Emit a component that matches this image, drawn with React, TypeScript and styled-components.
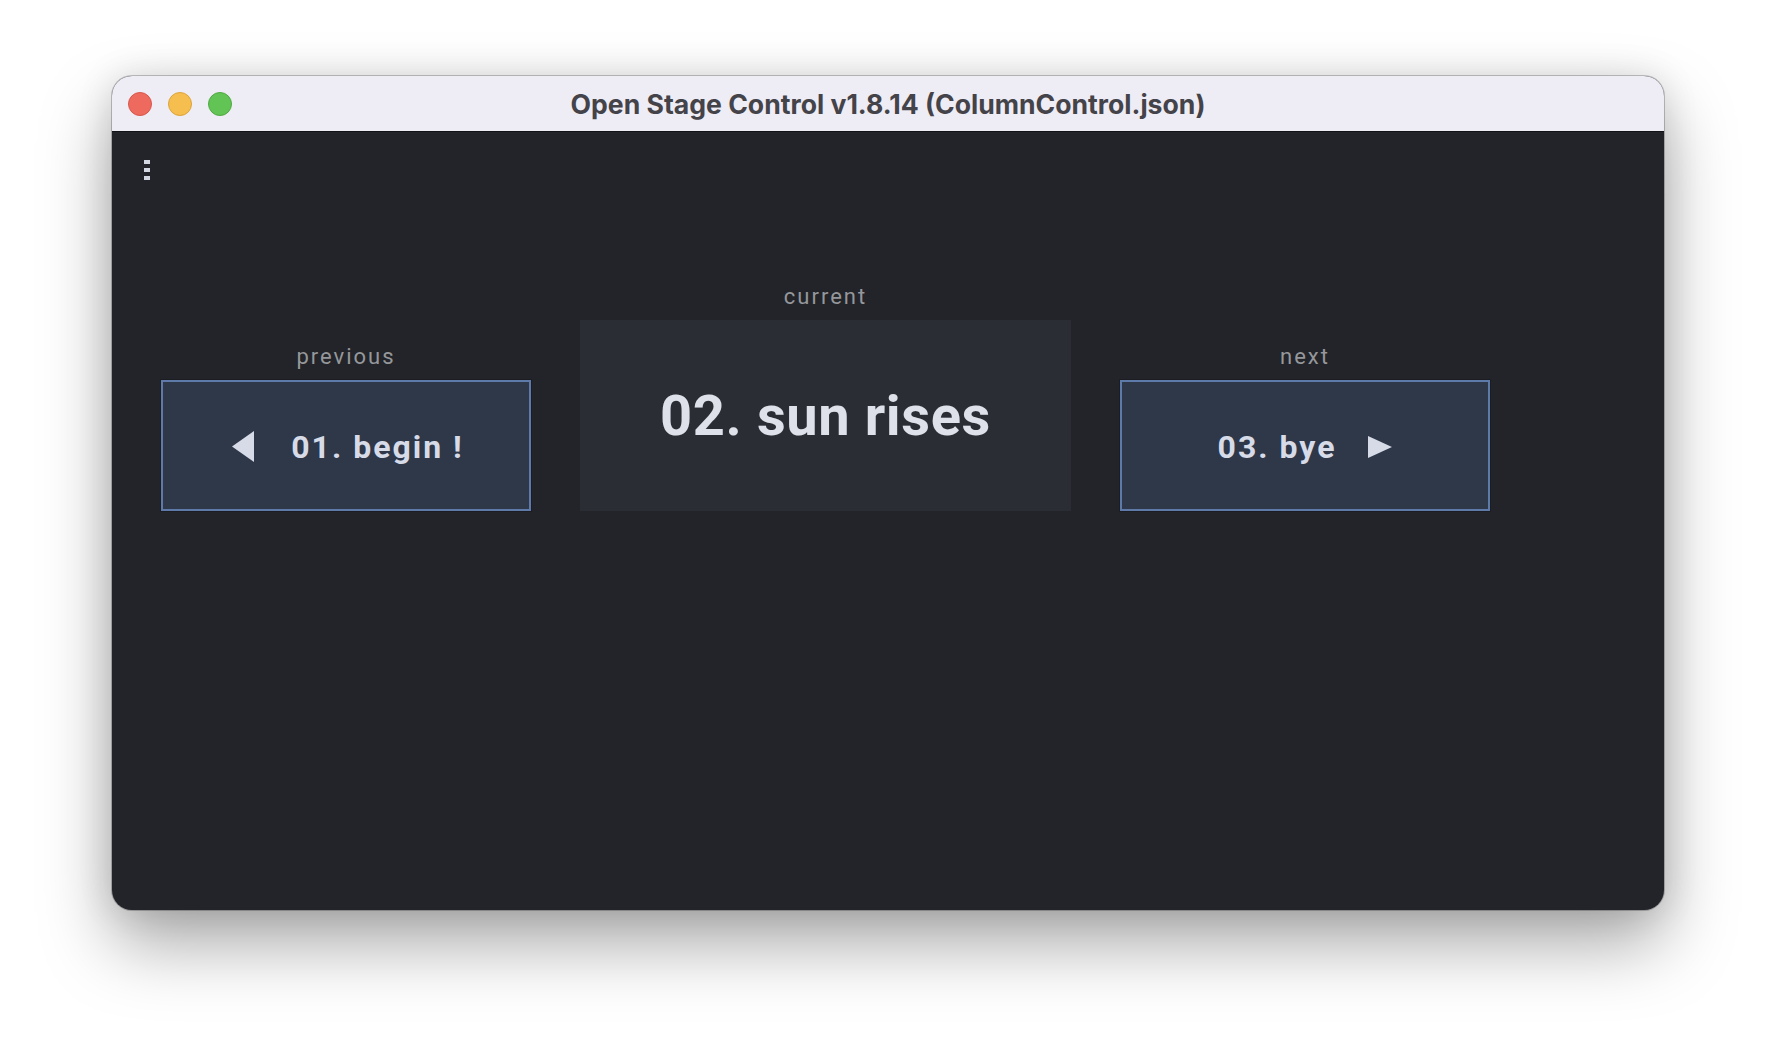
import React from 'react';
import styled, { createGlobalStyle } from 'styled-components';

const Global = createGlobalStyle`
  html, body { margin: 0; padding: 0; background: #ffffff; }
  body { font-family: Roboto, "Liberation Sans", sans-serif; }
`;

const Page = styled.div`
  width: 1776px;
  height: 1058px;
  box-sizing: border-box;
  padding: 76px 0 0 112px;
  background: #ffffff;
  overflow: hidden;
`;

const Window = styled.div`
  width: 1552px;
  height: 834px;
  border-radius: 20px;
  overflow: hidden;
  display: flex;
  flex-direction: column;
  background: #222429;
  box-shadow: 0 34px 70px rgba(0, 0, 0, 0.34), 0 0 36px rgba(0, 0, 0, 0.12),
    0 0 0 1px rgba(0, 0, 0, 0.22);
`;

const TitleBar = styled.div`
  height: 55px;
  flex: 0 0 auto;
  display: grid;
  grid-template-columns: 1fr auto 1fr;
  align-items: center;
  background: #eeecf4;
  border-bottom: 1px solid #121316;
`;

const Lights = styled.div`
  display: flex;
  gap: 16px;
  padding-left: 16px;
`;

const Light = styled.span<{ $c: string; $b: string }>`
  width: 24px;
  height: 24px;
  border-radius: 50%;
  box-sizing: border-box;
  background: ${(p) => p.$c};
  border: 1px solid ${(p) => p.$b};
`;

const Title = styled.div`
  font-family: Inter, "Liberation Sans", sans-serif;
  font-weight: 700;
  font-size: 26.6px;
  color: #444349;
  white-space: nowrap;
`;

const Content = styled.div`
  flex: 1;
  display: flex;
  flex-direction: column;
  padding-top: 28px;
`;

const MenuIcon = styled.svg`
  display: block;
  margin-left: 32px;
`;

const Row = styled.div`
  display: flex;
  align-items: flex-end;
  gap: 49px;
  margin: 102px 0 0 49px;
`;

const Column = styled.div`
  display: flex;
  flex-direction: column;
  align-items: center;
`;

const Label = styled.div`
  font-family: Roboto, "Liberation Sans", sans-serif;
  font-size: 22px;
  line-height: 30px;
  letter-spacing: 2px;
  color: #95979b;
  margin-bottom: 8px;
`;

const NavButton = styled.div<{ $gap: number; $shift: number }>`
  width: 370px;
  height: 131px;
  box-sizing: border-box;
  border: 2px solid #5e7aa9;
  outline: 1px solid #1b1d22;
  background: #2f3849;
  display: flex;
  align-items: center;
  justify-content: center;
  gap: ${(p) => p.$gap}px;
  padding: 2px 0 0 ${(p) => p.$shift}px;
  color: #d6dbe7;
  font-family: Roboto, "Liberation Sans", sans-serif;
  font-weight: 700;
  font-size: 32px;
  letter-spacing: 2px;
`;

const Current = styled.div`
  width: 491px;
  height: 191px;
  background: #2a2d33;
  display: flex;
  align-items: center;
  justify-content: center;
  color: #dfe1ea;
  font-family: Roboto, "Liberation Sans", sans-serif;
  font-weight: 700;
  font-size: 56px;
  letter-spacing: 0.6px;
`;

const Arrow = styled.svg`
  display: block;
  flex: 0 0 auto;
  fill: #d6dbe7;
`;

export default function App() {
  return (
    <>
      <Global />
      <Page>
        <Window>
          <TitleBar>
            <Lights>
              <Light $c="#ee6a5f" $b="#d8574d" />
              <Light $c="#f5be4f" $b="#dca43a" />
              <Light $c="#61c454" $b="#50a943" />
            </Lights>
            <Title>Open Stage Control v1.8.14 (ColumnControl.json)</Title>
            <div />
          </TitleBar>
          <Content>
            <MenuIcon width="6" height="20" viewBox="0 0 6 20">
              <rect x="0" y="0" width="6" height="4" fill="#d3d7e2" />
              <rect x="0" y="8" width="6" height="4" fill="#d3d7e2" />
              <rect x="0" y="16" width="6" height="4" fill="#d3d7e2" />
            </MenuIcon>
            <Row>
              <Column>
                <Label>previous</Label>
                <NavButton $gap={37} $shift={4}>
                  <Arrow width="22" height="31" viewBox="0 0 22 31">
                    <polygon points="22,0 22,31 0,15.5" />
                  </Arrow>
                  <span>01. begin !</span>
                </NavButton>
              </Column>
              <Column>
                <Label>current</Label>
                <Current>02. sun rises</Current>
              </Column>
              <Column>
                <Label>next</Label>
                <NavButton $gap={32} $shift={0}>
                  <span>03. bye</span>
                  <Arrow width="24" height="22" viewBox="0 0 24 22">
                    <polygon points="0,0 24,11 0,22" />
                  </Arrow>
                </NavButton>
              </Column>
            </Row>
          </Content>
        </Window>
      </Page>
    </>
  );
}
